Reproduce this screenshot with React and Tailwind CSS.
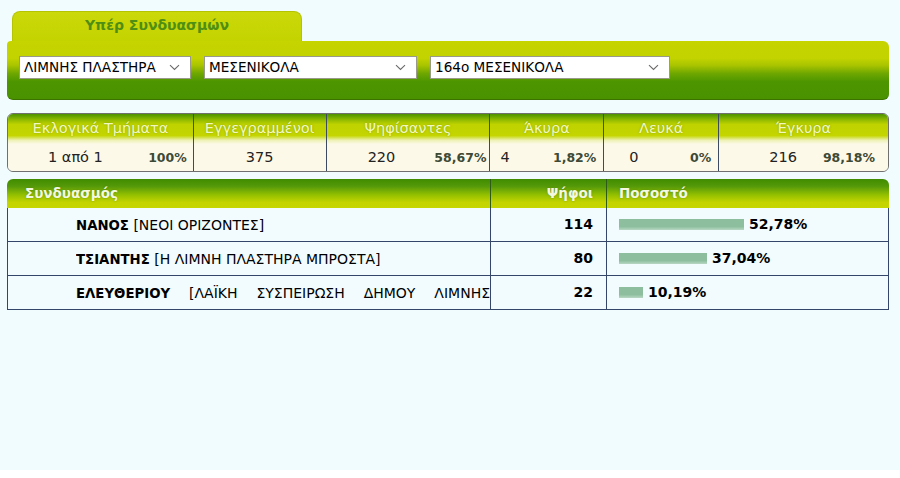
import React from "react";

const F = "font-['DejaVu_Sans',Verdana,sans-serif]";

function Chevron() {
  return (
    <svg width="11" height="7" viewBox="0 0 11 7" className="shrink-0">
      <path d="M1 1.2 L5.5 5.5 L10 1.2" fill="none" stroke="#6b6b6b" strokeWidth="1.1" />
    </svg>
  );
}

function Select({ w, text }) {
  return (
    <div
      className="h-[23px] bg-white border border-[#9a9a8a] flex items-center justify-between pl-[4px] pr-[10px] text-[13.6px] text-black"
      style={{ width: w }}
    >
      <span className="whitespace-nowrap">{text}</span>
      <Chevron />
    </div>
  );
}

const stats = [
  { label: "Εκλογικά Τμήματα", w: 186, num: "1 από 1", pct: "100%", pl: 40, pr: 6 },
  { label: "Εγγεγραμμένοι", w: 133, num: "375", pct: null, pl: 0, pr: 0 },
  { label: "Ψηφίσαντες", w: 164, num: "220", pct: "58,67%", pl: 41, pr: 3 },
  { label: "Άκυρα", w: 114, num: "4", pct: "1,82%", pl: 10, pr: 7 },
  { label: "Λευκά", w: 115, num: "0", pct: "0%", pl: 25, pr: 7 },
  { label: "Έγκυρα", w: 170, num: "216", pct: "98,18%", pl: 50, pr: 13 },
];

const rows = [
  { name: "ΝΑΝΟΣ", party: "[ΝΕΟΙ ΟΡΙΖΟΝΤΕΣ]", votes: "114", pct: 52.78 },
  { name: "ΤΣΙΑΝΤΗΣ", party: "[Η ΛΙΜΝΗ ΠΛΑΣΤΗΡΑ ΜΠΡΟΣΤΑ]", votes: "80", pct: 37.04 },
  { name: "ΕΛΕΥΘΕΡΙΟΥ", party: "[ΛΑΪΚΗ ΣΥΣΠΕΙΡΩΣΗ ΔΗΜΟΥ ΛΙΜΝΗΣ ΠΛΑΣΤΗΡΑ]", votes: "22", pct: 10.19 },
];

export default function App() {
  return (
    <div className={`${F} w-[900px] h-[478px] bg-white`}>
      <div className="h-[470px] bg-[#f1fcfe] pt-[11px] pl-[7px]">
        <div className="w-[882px]">
          {/* Tab */}
          <div className="ml-[5px] w-[290px] h-[30px] rounded-t-[8px] bg-gradient-to-b from-[#cbd80a] to-[#c3d300] border-t border-x border-[#b5c400] flex items-center justify-center pb-[2px]">
            <span className="text-[14px] font-bold text-[#4e8e14]">Υπέρ Συνδυασμών</span>
          </div>
          {/* Bar */}
          <div className="h-[59px] rounded-[6px] rounded-tl-[4px] border-b border-[#3b7200] bg-[linear-gradient(to_bottom,#c6d400_0%,#c2d300_30%,#a9c400_42%,#6ea700_56%,#4d9600_70%,#4a9200_100%)] flex items-start gap-[13px] pl-[12px] pt-[15px]">
            <Select w={172} text="ΛΙΜΝΗΣ ΠΛΑΣΤΗΡΑ" />
            <Select w={213} text="ΜΕΣΕΝΙΚΟΛΑ" />
            <Select w={240} text="164ο ΜΕΣΕΝΙΚΟΛΑ" />
          </div>

          {/* Stats */}
          <div className="mt-[13px] h-[59px] rounded-[6px] border border-[#707070] overflow-hidden flex">
            {stats.map((s, i) => (
              <div
                key={i}
                className={`flex flex-col ${i > 0 ? "border-l border-[#3c4a63]" : ""}`}
                style={{ width: i === 0 ? s.w - 1 : s.w }}
              >
                <div className="h-[30px] bg-[linear-gradient(to_bottom,#4c9200_0%,#8cb800_18%,#bfd300_35%,#c4d500_72%,#eef2b8_88%,#fcf9e6_100%)] flex items-center justify-center">
                  <span className="text-[14.5px] text-[#f3f8c0] whitespace-nowrap [text-shadow:0_0_2px_rgba(90,130,0,0.6)]">
                    {s.label}
                  </span>
                </div>
                <div
                  className={`flex-1 bg-[#fdf9e9] flex items-center ${s.pct ? "justify-between" : "justify-center"}`}
                  style={{ paddingLeft: s.pl, paddingRight: s.pr }}
                >
                  <span className="text-[14.5px] text-[#222]">{s.num}</span>
                  {s.pct && <span className="text-[12.5px] font-bold text-[#3d4a35] pt-[1px]">{s.pct}</span>}
                </div>
              </div>
            ))}
          </div>

          {/* Results */}
          <div className="mt-[7px]">
            <div className="h-[29px] rounded-t-[6px] bg-[linear-gradient(to_bottom,#3f8c00_0%,#55990a_25%,#94c000_55%,#c3d400_80%,#c6d600_100%)] flex text-[13.5px] font-bold text-[#f4f8e0] [text-shadow:0_0_2px_rgba(60,100,0,0.5)]">
              <div className="w-[484px] flex items-center pl-[18px] border-r border-[#2f5b1a]">Συνδυασμός</div>
              <div className="w-[116px] flex items-center justify-end pr-[13px] border-r border-[#2f5b1a]">Ψήφοι</div>
              <div className="flex-1 flex items-center pl-[12px]">Ποσοστό</div>
            </div>
            <div className="border-x border-b border-[#34476a]">
              {rows.map((r, i) => (
                <div key={i} className={`h-[33px] box-content flex bg-[#f2fcfe] ${i > 0 ? "border-t border-[#34476a]" : ""}`}>
                  <div className="w-[483px] pl-[68px] flex items-center border-r border-[#34476a] text-[14px] text-black">
                    <div className="h-[18px] leading-[18px] overflow-hidden text-justify w-full">
                      <b className="text-[13.3px]">{r.name}</b> {r.party}
                    </div>
                  </div>
                  <div className="w-[116px] flex items-center justify-end pr-[13px] border-r border-[#34476a] text-[14px] font-bold text-black">
                    {r.votes}
                  </div>
                  <div className="flex-1 flex items-center pl-[12px] gap-[5px]">
                    <div
                      className="h-[11px] bg-[linear-gradient(to_bottom,#8dbf9e_0%,#8dbf9e_70%,#b8d8c4_100%)]"
                      style={{ width: Math.round(r.pct * 2.37) }}
                    />
                    <span className="text-[14px] font-bold text-black">{r.pct.toFixed(2).replace(".", ",")}%</span>
                  </div>
                </div>
              ))}
            </div>
          </div>
        </div>
      </div>
    </div>
  );
}
